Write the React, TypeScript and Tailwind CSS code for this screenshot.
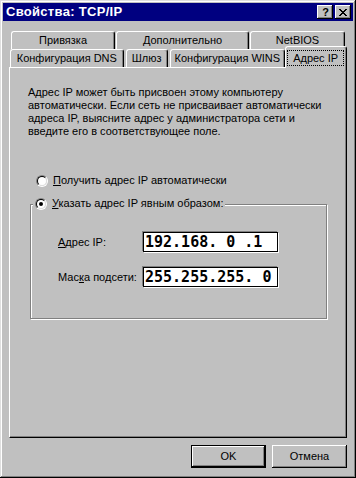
import React from 'react';

// ======================================
// HELPERS
// ======================================

const FONT = "font-['Liberation_Sans',Arial,sans-serif]";

const CLOSE_PIXELS = [
  'XX....XX',
  '.XX..XX.',
  '..XXXX..',
  '...XX...',
  '..XXXX..',
  '.XX..XX.',
  'XX....XX',
];

function CloseGlyph() {
  return (
    <svg width="8" height="7" viewBox="0 0 8 7" shapeRendering="crispEdges">
      {CLOSE_PIXELS.map((row, y) =>
        row.split('').map((c, x) =>
          c === 'X' ? <rect key={`${x}-${y}`} x={x} y={y} width="1" height="1" fill="#000" /> : null
        )
      )}
    </svg>
  );
}

function TitleButton({ children }: { children: React.ReactNode }) {
  return (
    <div className="w-[16px] h-[14px] bg-[#c0c0c0] flex items-center justify-center shadow-[inset_-1px_-1px_#000,inset_1px_1px_#fff,inset_-2px_-2px_#808080]">
      {children}
    </div>
  );
}

type TabProps = {
  label: string;
  width: string;
  selected?: boolean;
};

function Tab({ label, width, selected }: TabProps) {
  if (selected) {
    return (
      <div
        className={`${width} h-[22px] -mb-[1px] relative z-10 bg-[#c0c0c0] border-l border-t border-white border-r border-r-black rounded-t-[3px] shadow-[inset_-1px_0_#808080] flex pt-[4px] pl-[2px] pr-[3px] pb-[3px]`}
      >
        <span className="flex-1 outline-1 outline-dotted outline-black flex items-center justify-center leading-[13px] whitespace-nowrap">
          {label}
        </span>
      </div>
    );
  }

  return (
    <div
      className={`${width} h-[18px] bg-[#c0c0c0] border-l border-t border-white border-r border-r-black rounded-t-[3px] shadow-[inset_-1px_0_#808080] flex items-center justify-center pb-[1px] whitespace-nowrap`}
    >
      {label}
    </div>
  );
}

function Radio({ checked }: { checked?: boolean }) {
  return (
    <span className="w-[12px] h-[12px] rounded-full border border-t-[#808080] border-l-[#808080] border-b-white border-r-white flex shrink-0">
      <span className="w-[10px] h-[10px] rounded-full border border-t-black border-l-black border-b-[#dfdfdf] border-r-[#dfdfdf] bg-white flex items-center justify-center">
        {checked && <span className="w-[4px] h-[4px] rounded-full bg-black" />}
      </span>
    </span>
  );
}

function IpField({ value }: { value: string }) {
  return (
    <div className="w-[135px] h-[20px] bg-white border border-black shadow-[-1px_-1px_0_#808080,1px_1px_0_#fff] flex items-center pl-[1px]">
      <span className="font-['DejaVu_Sans_Mono',monospace] font-bold text-[15px] leading-[18px] whitespace-pre text-black">
        {value}
      </span>
    </div>
  );
}

function DialogButton({ label, isDefault }: { label: string; isDefault?: boolean }) {
  return (
    <div
      className={`w-[75px] h-[23px] bg-[#c0c0c0] flex items-center justify-center ${
        isDefault
          ? 'border border-black shadow-[inset_-1px_-1px_#000,inset_1px_1px_#fff,inset_-2px_-2px_#808080]'
          : 'shadow-[inset_-1px_-1px_#000,inset_1px_1px_#fff,inset_-2px_-2px_#808080]'
      }`}
    >
      {label}
    </div>
  );
}

// ======================================
// COMPONENT
// ======================================

export default function App() {
  return (
    <div
      className={`w-[356px] h-[478px] bg-[#c0c0c0] p-[3px] flex flex-col text-[11px] leading-[13px] text-black ${FONT} shadow-[inset_-1px_-1px_#000,inset_1px_1px_#dfdfdf,inset_-2px_-2px_#808080,inset_2px_2px_#fff]`}
    >
      {/* TITLE BAR */}
      <div className="h-[18px] bg-[#000080] flex items-center justify-between pl-[3px] pr-[2px]">
        <span className="text-white font-bold text-[13px] leading-[14px] tracking-[0.3px]">
          Свойства: TCP/IP
        </span>

        <div className="flex gap-[2px]">
          <TitleButton>
            <span className="font-bold text-[11px] leading-[11px] pl-[1px]">?</span>
          </TitleButton>

          <TitleButton>
            <CloseGlyph />
          </TitleButton>
        </div>
      </div>

      {/* BODY */}
      <div className="flex-1 flex flex-col px-[6px]">

        {/* TABS ROW 1 */}
        <div className="flex mt-[10px] pl-[2px] gap-[1px]">
          <Tab label="Привязка" width="w-[104px]" />
          <Tab label="Дополнительно" width="w-[133px]" />
          <Tab label="NetBIOS" width="w-[95px]" />
        </div>

        {/* TABS ROW 2 */}
        <div className="flex items-end h-[18px] pl-[1px]">
          <Tab label="Конфигурация DNS" width="w-[114px]" />
          <div className="w-[2px]" />
          <Tab label="Шлюз" width="w-[42px]" />
          <div className="w-[2px]" />
          <Tab label="Конфигурация WINS" width="w-[116px]" />
          <Tab label="Адрес IP" width="w-[62px]" selected />
        </div>

        {/* PANEL */}
        <div className="h-[371px] border-t border-l border-white border-b border-r border-b-black border-r-black shadow-[inset_-1px_-1px_#808080] flex flex-col pl-[18px] pt-[18px]">

          <p className="whitespace-nowrap">
            Адрес IP может быть присвоен этому компьютеру
            <br />
            автоматически. Если сеть не присваивает автоматически
            <br />
            адреса IP, выясните адрес у администратора сети и
            <br />
            введите его в соответствующее поле.
          </p>

          {/* RADIO AUTO */}
          <div className="flex items-center gap-[5px] mt-[36px] ml-[8px] h-[13px] whitespace-nowrap">
            <Radio />
            <span>
              <u>П</u>олучить адрес IP автоматически
            </span>
          </div>

          {/* GROUP */}
          <div className="mt-[17px] ml-[2px] w-[297px] h-[115px] border border-[#808080] shadow-[inset_1px_1px_#fff,1px_1px_0_#fff] flex flex-col">

            <div className="flex items-center gap-[5px] -mt-[8px] ml-[2px] px-[2px] h-[13px] bg-[#c0c0c0] self-start whitespace-nowrap">
              <Radio checked />
              <span>
                <u>У</u>казать адрес IP явным образом:
              </span>
            </div>

            <div className="flex items-center mt-[22px] ml-[27px]">
              <span className="w-[85px] whitespace-nowrap">
                <u>А</u>дрес IP:
              </span>
              <IpField value="192.168. 0 .1" />
            </div>

            <div className="flex items-center mt-[15px] ml-[27px]">
              <span className="w-[85px] whitespace-nowrap">
                Мас<u>к</u>а подсети:
              </span>
              <IpField value="255.255.255. 0" />
            </div>
          </div>
        </div>

        {/* BUTTONS */}
        <div className="flex justify-end gap-[6px] mt-[7px]">
          <DialogButton label="OK" isDefault />
          <DialogButton label="Отмена" />
        </div>
      </div>
    </div>
  );
}
